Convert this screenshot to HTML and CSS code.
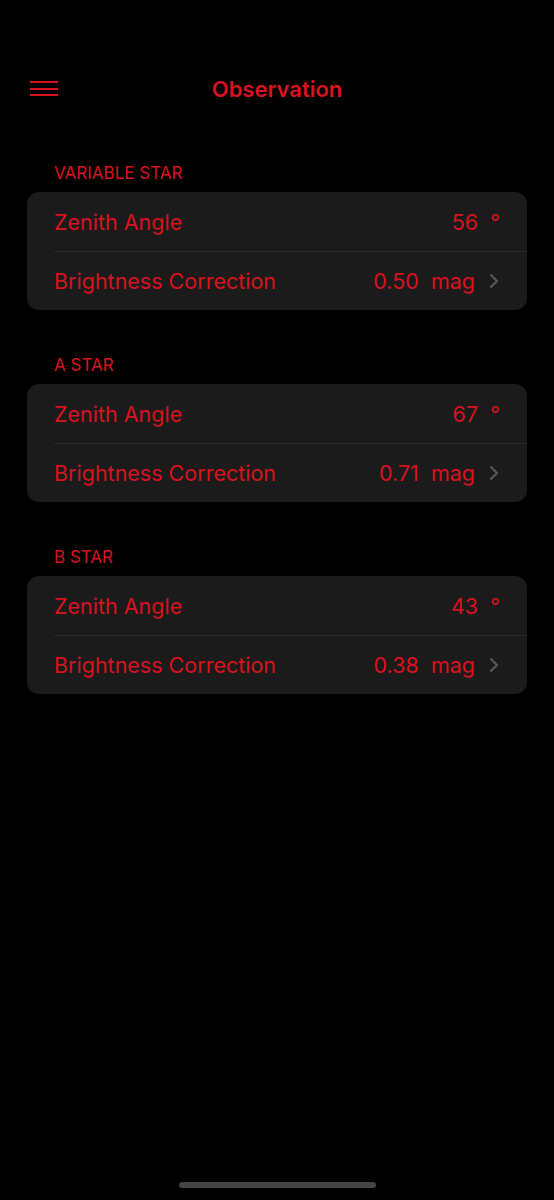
FILE: index.html
```html
<!DOCTYPE html>
<html>
<head>
<meta charset="utf-8">
<link rel="stylesheet" href="styles.css">
</head>
<body>
<div class="screen">
  <header class="nav">
    <div class="menu"><span></span><span></span><span></span></div>
    <h1 class="title">Observation</h1>
  </header>

  <section class="group">
    <div class="group-title">VARIABLE STAR</div>
    <div class="card">
      <div class="row"><span class="label">Zenith Angle</span><span class="value">56&nbsp;&nbsp;°</span></div>
      <div class="row link"><span class="label">Brightness Correction</span><span class="value">0.50&nbsp;&nbsp;mag</span><svg class="chev" viewBox="0 0 10 16"><path d="M2 2 L8 8 L2 14"/></svg></div>
    </div>
  </section>

  <section class="group">
    <div class="group-title">A STAR</div>
    <div class="card">
      <div class="row"><span class="label">Zenith Angle</span><span class="value">67&nbsp;&nbsp;°</span></div>
      <div class="row link"><span class="label">Brightness Correction</span><span class="value">0.71&nbsp;&nbsp;mag</span><svg class="chev" viewBox="0 0 10 16"><path d="M2 2 L8 8 L2 14"/></svg></div>
    </div>
  </section>

  <section class="group">
    <div class="group-title">B STAR</div>
    <div class="card">
      <div class="row"><span class="label">Zenith Angle</span><span class="value">43&nbsp;&nbsp;°</span></div>
      <div class="row link"><span class="label">Brightness Correction</span><span class="value">0.38&nbsp;&nbsp;mag</span><svg class="chev" viewBox="0 0 10 16"><path d="M2 2 L8 8 L2 14"/></svg></div>
    </div>
  </section>

  <div class="home"></div>
</div>
</body>
</html>
```

FILE: styles.css
```css
* { box-sizing: border-box; }
html, body { margin: 0; padding: 0; background: #000; }
body { font-family: Inter, Roboto, "Liberation Sans", sans-serif; color: #d9121f; }
.screen { width: 554px; height: 1200px; position: relative; padding: 70px 27px 0; display: flex; flex-direction: column; }
.nav { height: 38px; display: flex; align-items: center; justify-content: center; position: relative; }
.menu { position: absolute; left: 3px; top: 11px; width: 28px; display: flex; flex-direction: column; gap: 4.7px; }
.menu span { display: block; height: 2px; background: #d9121f; }
.title { margin: 0; font-size: 22px; font-weight: 600; }
.group { margin-top: 56px; }
.group + .group { margin-top: 46px; }
.group-title { padding-left: 27px; font-size: 17px; line-height: 18px; margin-bottom: 10px; }
.card { background: #1b1b1c; border-radius: 12px; padding-left: 27px; }
.row { height: 59px; display: flex; align-items: center; padding-right: 27px; font-size: 21.5px; }
.row + .row { border-top: 1px solid #2a2a2b; }
.label { flex: 1; }
.link { padding-right: 28px; }
.chev { width: 10px; height: 16px; margin-left: 14px; }
.chev path { fill: none; stroke: #5a5a5e; stroke-width: 2; stroke-linecap: round; stroke-linejoin: round; }
.home { position: absolute; left: 179px; top: 1182px; width: 197px; height: 6px; border-radius: 3px; background: #444; }
```
